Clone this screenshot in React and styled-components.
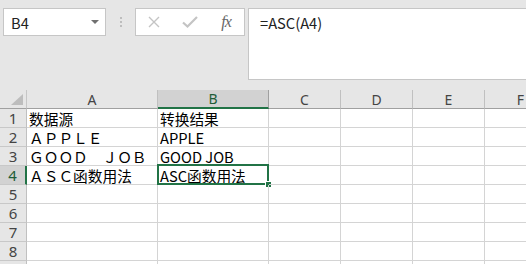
import React from "react";
import { styled, createGlobalStyle } from "styled-components";

const columns = [
    { key: "A", width: 131 },
    { key: "B", width: 111 },
    { key: "C", width: 72 },
    { key: "D", width: 72 },
    { key: "E", width: 72 },
    { key: "F", width: 72 },
];

const cells = [
    ["数据源", "转换结果"],
    ["ＡＰＰＬＥ", "APPLE"],
    ["ＧＯＯＤ　ＪＯＢ", "GOOD JOB"],
    ["ＡＳＣ函数用法", "ASC函数用法"],
    ["", ""],
    ["", ""],
    ["", ""],
    ["", ""],
    ["", ""],
];

const activeCol = "B";
const activeRow = 4;

const App = () => {
    return (
        <>
            <GlobalStyle />
            <Window>
                <FormulaToolbar>
                    <NameBox>
                        <NameText>B4</NameText>
                        <DropArrow />
                    </NameBox>
                    <Splitter>
                        <Dot />
                        <Dot />
                        <Dot />
                    </Splitter>
                    <ButtonBox>
                        <IconSlot>
                            <svg width="12" height="12" viewBox="0 0 12 12">
                                <path d="M1 1L11 11M11 1L1 11" stroke="#c4c4c4" strokeWidth="1.4" fill="none" />
                            </svg>
                        </IconSlot>
                        <IconSlot>
                            <svg width="16" height="12" viewBox="0 0 16 12">
                                <path d="M1 6.5L5.5 10.5L15 1" stroke="#c4c4c4" strokeWidth="2.2" fill="none" />
                            </svg>
                        </IconSlot>
                        <IconSlot>
                            <FxText>fx</FxText>
                        </IconSlot>
                    </ButtonBox>
                    <FormulaBox>=ASC(A4)</FormulaBox>
                </FormulaToolbar>
                <Sheet>
                    <CornerCell>
                        <svg width="12" height="11" viewBox="0 0 12 11">
                            <polygon points="0,11 12,11 12,0" fill="#bdbdbd" />
                        </svg>
                    </CornerCell>
                    {columns.map((col) => (
                        <ColumnHeader
                            key={col.key}
                            $width={col.width}
                            $active={col.key === activeCol}
                        >
                            {col.key}
                        </ColumnHeader>
                    ))}
                    {cells.map((row, i) => (
                        <React.Fragment key={i}>
                            <RowHeader $active={i + 1 === activeRow}>{i + 1}</RowHeader>
                            {columns.map((col, j) => {
                                const selected = col.key === activeCol && i + 1 === activeRow;
                                return (
                                    <Cell key={col.key} $width={col.width}>
                                        {row[j] || ""}
                                        {selected && (
                                            <>
                                                <SelectionFrame />
                                                <FillHandle />
                                            </>
                                        )}
                                    </Cell>
                                );
                            })}
                        </React.Fragment>
                    ))}
                </Sheet>
            </Window>
        </>
    );
};

const GlobalStyle = createGlobalStyle`
    html, body {
        margin: 0;
        padding: 0;
        background: #e6e6e6;
        overflow: hidden;
    }
    body {
        font-family: "Noto Sans CJK SC", "Noto Sans", sans-serif;
    }
`;

const Window = styled.div`
    width: 526px;
    height: 264px;
    overflow: hidden;
    display: flex;
    flex-direction: column;
    background-color: #e6e6e6;
`;

const FormulaToolbar = styled.div`
    height: 90px;
    box-sizing: border-box;
    display: flex;
    flex-direction: row;
    align-items: flex-start;
    padding: 8px 0 0 3px;
    flex-shrink: 0;
`;

const NameBox = styled.div`
    width: 103px;
    height: 28px;
    box-sizing: border-box;
    background-color: #ffffff;
    border: 1px solid #c6c6c6;
    display: flex;
    align-items: center;
    justify-content: space-between;
    padding: 0 6px 0 7px;
`;

const NameText = styled.span`
    font-size: 14.7px;
    color: #222;
`;

const DropArrow = styled.div`
    width: 0;
    height: 0;
    border-left: 4px solid transparent;
    border-right: 4px solid transparent;
    border-top: 4px solid #707070;
`;

const Splitter = styled.div`
    width: 29px;
    height: 28px;
    display: flex;
    flex-direction: column;
    align-items: center;
    justify-content: center;
    gap: 2px;
`;

const Dot = styled.div`
    width: 2px;
    height: 2px;
    background-color: #bdbdbd;
`;

const ButtonBox = styled.div`
    width: 110px;
    height: 28px;
    box-sizing: border-box;
    background-color: #ffffff;
    border: 1px solid #c6c6c6;
    display: flex;
    flex-direction: row;
`;

const IconSlot = styled.div`
    flex: 1;
    display: flex;
    align-items: center;
    justify-content: center;
`;

const FxText = styled.span`
    font-family: "Liberation Serif", "DejaVu Serif", serif;
    font-style: italic;
    font-size: 16px;
    color: #666;
    letter-spacing: -1px;
`;

const FormulaBox = styled.div`
    flex: 1;
    height: 72px;
    box-sizing: border-box;
    margin-left: 3px;
    margin-right: -2px;
    background-color: #ffffff;
    border: 1px solid #c6c6c6;
    padding: 4px 11px;
    font-size: 14.7px;
    line-height: 20px;
    color: #222;
`;

const Sheet = styled.div`
    display: grid;
    grid-template-columns: 27px repeat(6, max-content);
    grid-auto-rows: 19px;
    background-color: #ffffff;
`;

const CornerCell = styled.div`
    box-sizing: border-box;
    background-color: #e6e6e6;
    border-right: 1px solid #c6c6c6;
    border-bottom: 1px solid #a0a0a0;
    display: flex;
    align-items: flex-end;
    justify-content: flex-end;
    padding: 0 3px 3px 0;
`;

const ColumnHeader = styled.div`
    width: ${(p) => p.$width}px;
    box-sizing: border-box;
    background-color: ${(p) => (p.$active ? "#d2d2d2" : "#e6e6e6")};
    border-right: 1px solid ${(p) => (p.$active ? "#a0a0a0" : "#c0c0c0")};
    border-bottom: ${(p) => (p.$active ? "2px solid #217346" : "1px solid #a0a0a0")};
    display: flex;
    align-items: center;
    justify-content: center;
    font-family: "Noto Sans", sans-serif;
    font-size: 14px;
    color: ${(p) => (p.$active ? "#1f5d39" : "#444")};
`;

const RowHeader = styled.div`
    box-sizing: border-box;
    background-color: ${(p) => (p.$active ? "#d2d2d2" : "#e6e6e6")};
    border-right: ${(p) => (p.$active ? "2px solid #217346" : "1px solid #c0c0c0")};
    border-bottom: 1px solid #c8c8c8;
    display: flex;
    align-items: flex-end;
    justify-content: center;
    font-family: "Noto Sans", sans-serif;
    font-size: 15px;
    line-height: 17px;
    color: ${(p) => (p.$active ? "#1f5d39" : "#444")};
`;

const Cell = styled.div`
    position: relative;
    width: ${(p) => p.$width}px;
    box-sizing: border-box;
    border-right: 1px solid #d4d4d4;
    border-bottom: 1px solid #d4d4d4;
    display: flex;
    align-items: flex-end;
    padding-left: 2px;
    font-size: 14.7px;
    line-height: 17px;
    color: #000;
    white-space: nowrap;
`;

const SelectionFrame = styled.div`
    position: absolute;
    top: -2px;
    left: -1px;
    right: -1px;
    bottom: -1px;
    border: 2px solid #217346;
    pointer-events: none;
`;

const FillHandle = styled.div`
    position: absolute;
    right: -4px;
    bottom: -4px;
    width: 5px;
    height: 5px;
    background-color: #217346;
    border: 1px solid #ffffff;
`;

export default App;
